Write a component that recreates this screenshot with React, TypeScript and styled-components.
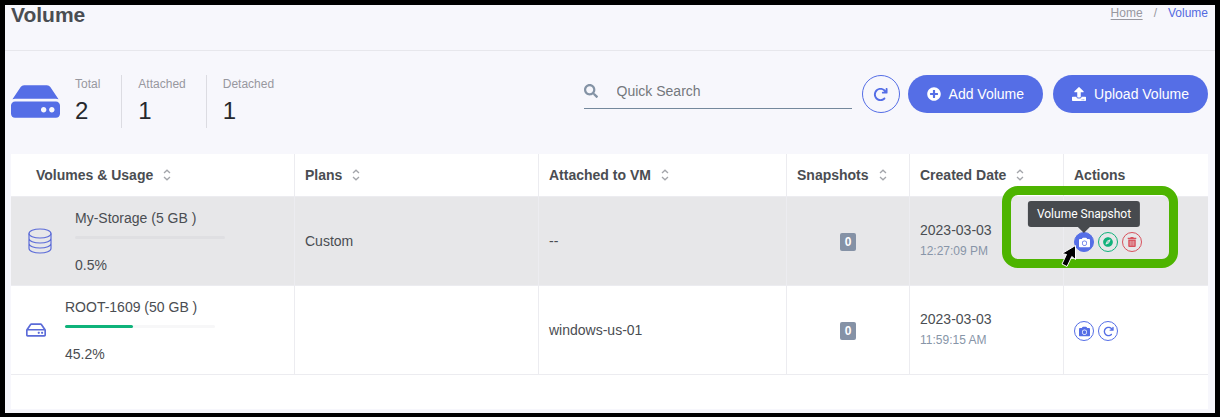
import React from 'react';
import styled, { createGlobalStyle } from 'styled-components';
import { FaHdd, FaRegHdd, FaSearch, FaPlusCircle, FaUpload, FaCamera, FaCompass, FaTrashAlt } from 'react-icons/fa';
import { FaArrowRotateRight } from 'react-icons/fa6';

const GlobalStyle = createGlobalStyle`
  * { box-sizing: border-box; }
  body {
    margin: 0;
    background: #000;
    color: #4a4d52;
    font: 14px/20px "Liberation Sans", Arial, sans-serif;
  }
  button, input { font: inherit; }
`;

const Page = styled.main`
  display: flow-root;
  min-height: calc(100vh - 10px);
  margin: 5px;
  padding-bottom: 4px;
  background: #f7f7fc;
`;

const Header = styled.header`
  display: flex;
  justify-content: space-between;
  height: 46px;
  padding: 0 7px 0 6px;
  border-bottom: 1px solid #e7e7ec;
`;

const Title = styled.h1`
  margin: 0;
  font-size: 21px;
  line-height: 20px;
`;

const Breadcrumb = styled.nav`
  display: flex;
  gap: 11px;
  font-size: 12px;
  line-height: 16px;
  color: #98989f;
`;

const Crumb = styled.a<{ $current?: boolean }>`
  color: ${p => (p.$current ? '#536ae0' : '#98989f')};
  text-decoration: ${p => (p.$current ? 'none' : 'underline')};
  text-underline-offset: 2px;
`;

const Toolbar = styled.section`
  display: flex;
  align-items: flex-start;
  justify-content: space-between;
  padding: 24px 7px 26px 6px;
`;

const Summary = styled.div`
  display: flex;
  align-items: center;
  color: #556ee6;
`;

const Stats = styled.dl`
  display: flex;
  margin: 0;
`;

const Stat = styled.div`
  height: 53px;
  padding: 0 20px 0 16px;
  & + & { border-left: 1px solid #dcdce2; }
  &:first-child { padding: 0 21px 0 15px; }
`;

const StatLabel = styled.dt`
  font-size: 12px;
  line-height: 18px;
  color: #98989f;
`;

const StatValue = styled.dd`
  margin: 4px 0 0;
  font-size: 24px;
  line-height: 28px;
  color: #26282c;
`;

const Tools = styled.div`
  display: flex;
  gap: 10px;
`;

const ButtonPair = styled.div`
  display: flex;
  gap: 8px;
`;

const Search = styled.label`
  display: flex;
  align-items: center;
  gap: 19px;
  width: 268px;
  height: 34px;
  padding-bottom: 2px;
  border-bottom: 1px solid #74889c;
  color: #8493a5;
`;

const SearchInput = styled.input`
  flex: 1;
  min-width: 0;
  padding: 0;
  border: 0;
  outline: 0;
  background: transparent;
  color: #6c757d;
  &::placeholder { color: #74777d; opacity: 1; }
`;

const RoundButton = styled.button`
  display: flex;
  align-items: center;
  justify-content: center;
  width: 38px;
  height: 38px;
  padding: 0;
  border: 1px solid #556ee6;
  border-radius: 50%;
  background: transparent;
  color: #556ee6;
`;

const PillButton = styled.button`
  display: flex;
  align-items: center;
  gap: 8px;
  height: 38px;
  padding: 0 19px;
  border: 0;
  border-radius: 19px;
  background: #556ee6;
  color: #fff;
`;

const Panel = styled.section`
  min-height: 255px;
  margin: 0 7px 0 6px;
  background: #fff;
`;

const Table = styled.table`
  width: 100%;
  table-layout: fixed;
  border-collapse: separate;
  border-spacing: 0;
`;

const Column = styled.col<{ $width: number }>`
  width: ${p => p.$width}px;
`;

const HeadCell = styled.th`
  height: 43px;
  padding: 0 10px;
  border-bottom: 1px solid #ececf0;
  border-right: 1px solid #ececf0;
  text-align: left;
  white-space: nowrap;
  &:first-child { padding-left: 25px; }
  &:last-child { border-right: 0; }
`;

const HeadLabel = styled.span`
  display: flex;
  align-items: center;
  gap: 10px;
`;

const Row = styled.tr<{ $hovered?: boolean }>`
  background: ${p => (p.$hovered ? '#e7e7e9' : '#fff')};
`;

const Cell = styled.td<{ $centered?: boolean }>`
  height: 89px;
  padding: 0 10px;
  border-bottom: 1px solid #ececf0;
  border-right: 1px solid #ececf0;
  text-align: ${p => (p.$centered ? 'center' : 'left')};
  &:first-child { padding: 0 15px; }
  &:last-child { border-right: 0; }
`;

const VolumeInfo = styled.div<{ $gap: number }>`
  display: flex;
  align-items: center;
  gap: ${p => p.$gap}px;
  color: #5b6bd8;
`;

const Usage = styled.div`
  color: #4a4d52;
`;

const Bar = styled.div`
  width: 150px;
  height: 3px;
  margin: 8px 0 16px;
  border-radius: 2px;
  background: rgba(60, 60, 80, 0.04);
`;

const BarFill = styled.div`
  height: 3px;
  border-radius: 2px;
  background: #0fb37a;
`;

const Badge = styled.span`
  display: inline-block;
  padding: 0 5px;
  border-radius: 2px;
  background: #8592a6;
  color: #fff;
  font-size: 12px;
  font-weight: bold;
  line-height: 18px;
`;

const Time = styled.div`
  font-size: 12px;
  line-height: 22px;
  color: #8795a8;
`;

const Actions = styled.div`
  position: relative;
  display: flex;
  gap: 4px;
  padding-top: 2px;
`;

const tones = { blue: '#556ee6', green: '#10b27b', red: '#d8505c' };

const ActionButton = styled.button<{ $tone: keyof typeof tones; $active?: boolean }>`
  position: relative;
  display: flex;
  align-items: center;
  justify-content: center;
  width: 20px;
  height: 20px;
  padding: 0;
  border: 1px solid ${p => tones[p.$tone]};
  border-radius: 50%;
  background: ${p => (p.$active ? tones[p.$tone] : 'transparent')};
  color: ${p => (p.$active ? '#fff' : tones[p.$tone])};
`;

const Tooltip = styled.span`
  position: absolute;
  bottom: 24px;
  left: 50%;
  transform: translateX(-50%);
  padding: 0 9px;
  border-radius: 3px;
  background: #474a4e;
  color: #fff;
  font: 12px/26px Roboto, sans-serif;
  white-space: nowrap;
  &::after {
    content: "";
    position: absolute;
    top: 100%;
    left: 50%;
    margin-left: -6px;
    border: 6px solid transparent;
    border-bottom: 0;
    border-top-color: #474a4e;
  }
`;

const Highlight = styled.div`
  position: absolute;
  top: -44px;
  left: -72px;
  width: 176px;
  height: 82px;
  border: 9px solid #4db400;
  border-radius: 16px;
  pointer-events: none;
`;

const Pointer = styled.svg`
  position: absolute;
  top: 14px;
  left: -13px;
  pointer-events: none;
`;

function SortIcon() {
  return (
    <svg width="8" height="12" viewBox="0 0 8 12" fill="none" stroke="#a3a5aa" strokeWidth="1.3" aria-hidden="true">
      <path d="M1 4 4 1.2 7 4M1 8l3 2.8L7 8" />
    </svg>
  );
}

function DatabaseIcon() {
  return (
    <svg width="28" height="26" viewBox="-2 0 28 26" fill="none" stroke="currentColor" strokeWidth="1.2" aria-hidden="true">
      <ellipse cx="12" cy="5.5" rx="11" ry="4.5" />
      <path d="M1 5.5v15c0 2.5 4.9 4.5 11 4.5s11-2 11-4.5v-15M1 10.5C1 13 5.9 15 12 15s11-2 11-4.5M1 15.5C1 18 5.9 20 12 20s11-2 11-4.5" />
    </svg>
  );
}

const columns = [
  { label: 'Volumes & Usage', width: 284 },
  { label: 'Plans', width: 244 },
  { label: 'Attached to VM', width: 248 },
  { label: 'Snapshots', width: 123 },
  { label: 'Created Date', width: 154 },
  { label: 'Actions', width: 144 },
];

const stats = [
  { label: 'Total', value: 2 },
  { label: 'Attached', value: 1 },
  { label: 'Detached', value: 1 },
];

function UsageBlock({ name, percent, filled }: { name: string; percent: string; filled: number }) {
  return (
    <Usage>
      {name}
      <Bar><BarFill style={{ width: `${filled}%` }} /></Bar>
      {percent}
    </Usage>
  );
}

export default function App() {
  return (
    <>
      <GlobalStyle />
      <Page>
        <Header>
          <Title>Volume</Title>
          <Breadcrumb aria-label="Breadcrumb">
            <Crumb href="#home">Home</Crumb>
            <span>/</span>
            <Crumb href="#volume" $current>Volume</Crumb>
          </Breadcrumb>
        </Header>
        <Toolbar>
          <Summary>
            <FaHdd size={49} />
            <Stats>
              {stats.map(s => (
                <Stat key={s.label}>
                  <StatLabel>{s.label}</StatLabel>
                  <StatValue>{s.value}</StatValue>
                </Stat>
              ))}
            </Stats>
          </Summary>
          <Tools>
            <Search>
              <FaSearch size={14} />
              <SearchInput type="search" placeholder="Quick Search" aria-label="Quick Search" />
            </Search>
            <ButtonPair>
              <RoundButton aria-label="Refresh"><FaArrowRotateRight size={15} /></RoundButton>
              <PillButton><FaPlusCircle size={14} />Add Volume</PillButton>
            </ButtonPair>
            <PillButton><FaUpload size={14} />Upload Volume</PillButton>
          </Tools>
        </Toolbar>
        <Panel>
          <Table>
            <colgroup>
              {columns.map(c => <Column key={c.label} $width={c.width} />)}
            </colgroup>
            <thead>
              <tr>
                {columns.map(c => (
                  <HeadCell key={c.label} scope="col">
                    <HeadLabel>{c.label}{c.label !== 'Actions' && <SortIcon />}</HeadLabel>
                  </HeadCell>
                ))}
              </tr>
            </thead>
            <tbody>
              <Row $hovered>
                <Cell>
                  <VolumeInfo $gap={21}>
                    <DatabaseIcon />
                    <UsageBlock name="My-Storage (5 GB )" percent="0.5%" filled={0} />
                  </VolumeInfo>
                </Cell>
                <Cell>Custom</Cell>
                <Cell>--</Cell>
                <Cell $centered><Badge>0</Badge></Cell>
                <Cell>2023-03-03<Time>12:27:09 PM</Time></Cell>
                <Cell>
                  <Actions>
                    <ActionButton $tone="blue" $active aria-label="Volume Snapshot">
                      <FaCamera size={11} />
                      <Tooltip role="tooltip">Volume Snapshot</Tooltip>
                    </ActionButton>
                    <ActionButton $tone="green" aria-label="Attach volume"><FaCompass size={10} /></ActionButton>
                    <ActionButton $tone="red" aria-label="Delete volume"><FaTrashAlt size={10} /></ActionButton>
                    <Highlight />
                    <Pointer width="16" height="24" viewBox="0 0 16 24" aria-hidden="true">
                      <path d="M14.5 1.5 14.5 15.5 10.8 12.5 6 22.5 1 20 5.5 10.5 1 9.5Z" fill="#000" stroke="#fff" strokeWidth="1" />
                    </Pointer>
                  </Actions>
                </Cell>
              </Row>
              <Row>
                <Cell>
                  <VolumeInfo $gap={19}>
                    <FaRegHdd size={20} />
                    <UsageBlock name="ROOT-1609 (50 GB )" percent="45.2%" filled={45.2} />
                  </VolumeInfo>
                </Cell>
                <Cell />
                <Cell>windows-us-01</Cell>
                <Cell $centered><Badge>0</Badge></Cell>
                <Cell>2023-03-03<Time>11:59:15 AM</Time></Cell>
                <Cell>
                  <Actions>
                    <ActionButton $tone="blue" aria-label="Volume Snapshot"><FaCamera size={11} /></ActionButton>
                    <ActionButton $tone="blue" aria-label="Refresh volume"><FaArrowRotateRight size={11} /></ActionButton>
                  </Actions>
                </Cell>
              </Row>
            </tbody>
          </Table>
        </Panel>
      </Page>
    </>
  );
}
